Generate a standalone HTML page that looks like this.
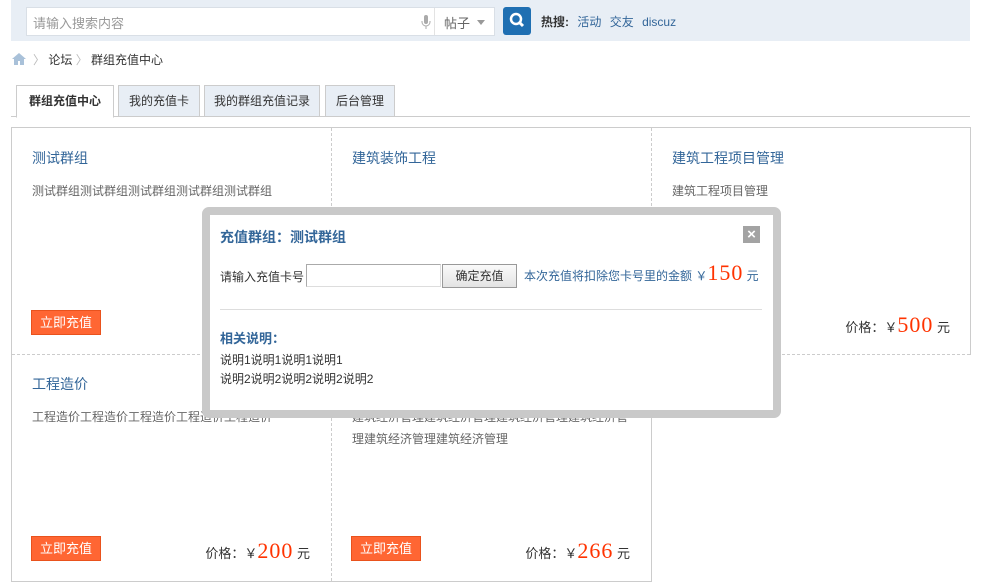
<!DOCTYPE html>
<html><head><meta charset="utf-8"><style>
*{margin:0;padding:0;box-sizing:border-box}
body{width:982px;height:585px;background:#fff;font-family:"Liberation Sans","Noto Sans CJK SC",sans-serif;font-size:12px;color:#333;position:relative;overflow:hidden}
.a{position:absolute}
.hdr{left:11px;top:0;width:959px;height:41px;background:#e8eef5}
.inp{left:26px;top:7px;width:469px;height:29px;background:#fff;border:1px solid #d9dfe6}
.tab{top:85px;height:32px;border:1px solid #ccc;background:#e8eef5;font-size:12px;text-align:center;line-height:30px;color:#333}
.cell{width:320px;height:227px}
.t{position:absolute;left:21px;top:20px;font-size:14px;color:#336699}
.d{position:absolute;left:21px;top:52px;font-size:12px;color:#666;line-height:22px;width:285px}
.btn{position:absolute;left:20px;bottom:20px;width:70px;height:25px;background:#ff6633;border:1px solid #e9521d;color:#fff;font-size:13px;text-align:center;line-height:23px}
.pr{position:absolute;right:21px;bottom:17px;font-size:13px;color:#333;white-space:nowrap}
.pr b{font-family:"Liberation Serif",serif;font-weight:normal;color:#ff3300;font-size:22px;letter-spacing:1px}
</style></head><body>
<div class="a hdr"></div>
<div class="a inp"><span class="a" style="left:6px;top:5px;color:#999;font-size:13px">请输入搜索内容</span>
<svg class="a" style="left:394px;top:7px" width="10" height="15"><rect x="3" y="0" width="4" height="9" rx="2" fill="#aaa"/><path d="M1 6v1a4 4 0 0 0 8 0V6M5 11v3" stroke="#aaa" fill="none"/></svg>
<div class="a" style="left:407px;top:0;height:27px;border-left:1px solid #e3e3e3"></div>
<span class="a" style="left:417px;top:5px;color:#666;font-size:13px">帖子</span>
<div class="a" style="left:450px;top:12px;border:4px solid transparent;border-top:5px solid #999"></div></div>
<div class="a" style="left:503px;top:7px;width:28px;height:28px;background:#1f6fb2;border-radius:3px"><svg width="28" height="28"><circle cx="13" cy="12" r="5" stroke="#fff" stroke-width="2.5" fill="none"/><path d="M16 15l4 4" stroke="#fff" stroke-width="3"/></svg></div>
<div class="a" style="left:541px;top:13px;font-size:12px"><b style="color:#333">热搜:</b> <span style="color:#336699;margin-left:5px">活动</span> <span style="color:#336699;margin-left:5px">交友</span> <span style="color:#336699;margin-left:5px">discuz</span></div>
<svg class="a" style="left:11px;top:52px" width="16" height="14"><path d="M1 7L8 1l7 6h-2v6H9V9H7v4H3V7z" fill="#a9c1d9"/></svg>
<div class="a" style="left:33px;top:51px;font-size:12px;color:#333"><span style="color:#bbb">〉</span> 论坛 <span style="color:#bbb">〉</span> 群组充值中心</div>
<div class="a" style="left:11px;top:116px;width:959px;border-top:1px solid #ccc"></div>
<div class="a tab" style="left:16px;width:98px;background:#fff;border-bottom:1px solid #fff;font-weight:bold;height:33px">群组充值中心</div>
<div class="a tab" style="left:118px;width:82px">我的充值卡</div>
<div class="a tab" style="left:204px;width:116px">我的群组充值记录</div>
<div class="a tab" style="left:325px;width:70px">后台管理</div>
<div class="a" style="left:11px;top:127px;width:960px;height:228px;border:1px solid #ccc;border-bottom:none"></div>
<div class="a" style="left:11px;top:354px;width:641px;height:228px;border:1px solid #ccc;border-top:none"></div>
<div class="a" style="left:12px;top:354px;width:958px;border-top:1px dashed #ccc"></div>
<div class="a" style="left:331px;top:128px;height:453px;border-left:1px dashed #ccc"></div>
<div class="a" style="left:651px;top:128px;height:453px;border-left:1px dashed #ccc"></div>
<div class="a cell" style="left:11px;top:128px"><div class="t">测试群组</div><div class="d">测试群组测试群组测试群组测试群组测试群组</div><div class="btn">立即充值</div></div>
<div class="a cell" style="left:331px;top:128px"><div class="t">建筑装饰工程</div></div>
<div class="a cell" style="left:651px;top:128px"><div class="t">建筑工程项目管理</div><div class="d">建筑工程项目管理</div><div class="pr">价格：￥<b>500</b> 元</div></div>
<div class="a cell" style="left:11px;top:354px"><div class="t">工程造价</div><div class="d">工程造价工程造价工程造价工程造价工程造价</div><div class="btn">立即充值</div><div class="pr">价格：￥<b>200</b> 元</div></div>
<div class="a cell" style="left:331px;top:354px"><div class="d">建筑经济管理建筑经济管理建筑经济管理建筑经济管理建筑经济管理建筑经济管理</div><div class="btn">立即充值</div><div class="pr">价格：￥<b>266</b> 元</div></div>
<div class="a" style="left:202px;top:207px;width:579px;height:211px;border:8px solid #c9c9c9;border-radius:7px;background:#fff">
<div class="a" style="left:10px;top:12px;font-size:14px;font-weight:bold;color:#336699">充值群组：测试群组</div>
<div class="a" style="left:533px;top:11px;width:17px;height:17px;background:#a3a3a3;color:#fff;font-size:15px;font-weight:bold;text-align:center;line-height:17px">×</div>
<div class="a" style="left:10px;top:53px;color:#333">请输入充值卡号</div>
<div class="a" style="left:96px;top:49px;width:135px;height:23px;border:1px solid #aaa;border-right-color:#ddd;border-bottom-color:#ddd"></div>
<div class="a" style="left:232px;top:49px;width:75px;height:24px;border:1px solid #999;background:linear-gradient(#fafafa,#e3e3e3);text-align:center;line-height:22px;color:#333">确定充值</div>
<div class="a" style="left:314px;top:45px;color:#336699;white-space:nowrap;font-size:12px">本次充值将扣除您卡号里的金额 ￥<span style="font-family:'Liberation Serif',serif;color:#ff3300;font-size:22px;letter-spacing:1px">150</span> 元</div>
<div class="a" style="left:10px;top:94px;width:542px;border-top:1px solid #ddd"></div>
<div class="a" style="left:10px;top:113px;font-weight:bold;color:#336699;font-size:13px">相关说明：</div>
<div class="a" style="left:10px;top:136px;line-height:19px;color:#333">说明1说明1说明1说明1<br>说明2说明2说明2说明2说明2</div>
</div>
</body></html>
